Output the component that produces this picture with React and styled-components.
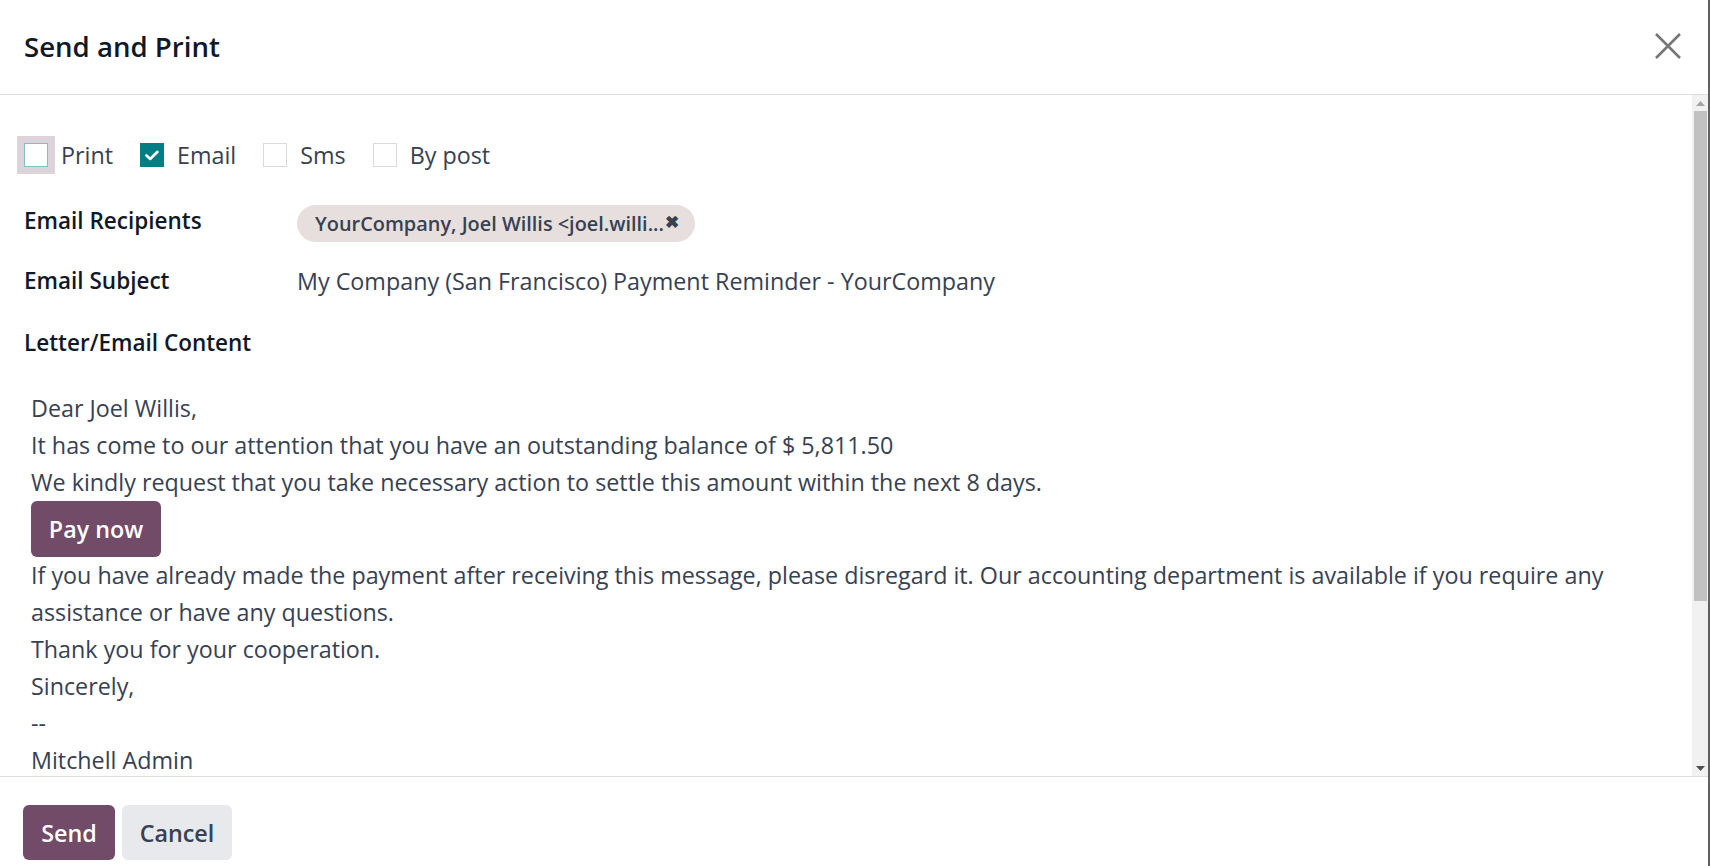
import styled, { createGlobalStyle } from 'styled-components';

const GlobalStyle = createGlobalStyle`
  html, body {
    margin: 0;
    padding: 0;
    background: #fff;
  }
  body {
    font-family: "Open Sans", "Noto Sans", sans-serif;
    color: #374151;
  }
  * {
    box-sizing: border-box;
  }
`;

const Dialog = styled.div`
  display: flex;
  flex-direction: column;
  height: 100vh;
  width: 100%;
  border-right: 2px solid #5f5f5f;
  background: #fff;
`;

const Header = styled.header`
  display: flex;
  align-items: center;
  justify-content: space-between;
  height: 95px;
  padding: 0 27px 2px 24px;
  border-bottom: 1px solid #dcdde0;
  flex-shrink: 0;
`;

const Title = styled.h4`
  margin: 0;
  font-size: 27.6px;
  font-weight: 600;
  color: #111827;
`;

const CloseButton = styled.button`
  border: 0;
  background: none;
  padding: 0;
  width: 26px;
  height: 26px;
  cursor: pointer;
  display: flex;
  svg {
    display: block;
  }
`;

const Middle = styled.div`
  flex: 1;
  min-height: 0;
  display: flex;
`;

const Body = styled.main`
  flex: 1;
  min-width: 0;
  overflow: hidden;
  padding: 41px 24px 0 24px;
`;

const Scrollbar = styled.div`
  width: 16px;
  flex-shrink: 0;
  display: flex;
  flex-direction: column;
  background: #f1f1f1;
`;

const ScrollArrow = styled.div`
  height: 16px;
  display: flex;
  align-items: center;
  justify-content: center;
  flex-shrink: 0;
`;

const ScrollTrack = styled.div`
  flex: 1;
  padding: 0 1px 0 2px;
`;

const ScrollThumb = styled.div`
  height: 490px;
  background: #c1c1c1;
`;

const OptionRow = styled.div`
  display: flex;
  align-items: center;
  height: 38px;
`;

const Option = styled.label`
  display: flex;
  align-items: center;
  gap: 13px;
  margin-right: 27px;
  font-size: 23.3px;
  color: #374151;
  cursor: pointer;
`;

const Box = styled.span`
  width: 24px;
  height: 24px;
  display: flex;
  align-items: center;
  justify-content: center;
  border: 1px solid ${(p) => (p.$checked ? '#017e84' : p.$focus ? '#7fbfc2' : '#d8dadd')};
  background: ${(p) => (p.$checked ? '#017e84' : '#fff')};
  box-shadow: ${(p) => (p.$focus ? '0 0 0 7px #ddd3da' : 'none')};
`;

const FieldRow = styled.div`
  display: grid;
  grid-template-columns: 273px 1fr;
  align-items: center;
  min-height: 37px;
  margin-top: ${(p) => p.$gap}px;
`;

const FieldLabel = styled.div`
  font-size: 22.5px;
  font-weight: 600;
  color: #111827;
  line-height: 37px;
  margin-top: ${(p) => p.$shift || 0}px;
`;

const FieldValue = styled.div`
  font-size: 23.3px;
  line-height: 37px;
  color: #374151;
`;

const Tag = styled.span`
  display: inline-flex;
  align-items: center;
  height: 37px;
  padding: 0 16px 0 18px;
  border-radius: 19px;
  background: #e6dfde;
  color: #374151;
  font-size: 19.9px;
  font-weight: 600;
  gap: 1px;
`;

const TagRemove = styled.span`
  font-size: 17px;
  color: #374151;
  line-height: 1;
  margin-top: -4px;
`;

const Letter = styled.div`
  padding: 29px 7px 0 7px;
  font-size: 23.3px;
  line-height: 37px;
  color: #374151;
  max-width: 1625px;
`;

const Line = styled.div``;

const PayButton = styled.a`
  display: inline-flex;
  align-items: center;
  justify-content: center;
  width: 130px;
  height: 56px;
  border-radius: 6px;
  background: #714b67;
  color: #fff;
  font-size: 23.3px;
  font-weight: 600;
  text-decoration: none;
  vertical-align: top;
`;

const Footer = styled.footer`
  display: flex;
  gap: 7px;
  height: 90px;
  padding: 28px 23px 0;
  border-top: 1px solid #dcdde0;
  flex-shrink: 0;
`;

const Button = styled.button`
  height: 55px;
  width: ${(p) => (p.$primary ? 92 : 110)}px;
  padding: 0;
  border: 0;
  border-radius: 6px;
  background: ${(p) => (p.$primary ? '#714b67' : '#e7e9ed')};
  color: ${(p) => (p.$primary ? '#fff' : '#374151')};
  font-family: inherit;
  font-size: 23.3px;
  font-weight: 600;
  cursor: pointer;
`;

function Check() {
  return (
    <svg width="14" height="11" viewBox="0 0 14 11">
      <path d="M1.5 5.5 L5.2 9 L12.5 1.8" fill="none" stroke="#fff" strokeWidth="2.6" strokeLinecap="round" strokeLinejoin="round" />
    </svg>
  );
}

function Arrow({ up, color }) {
  return (
    <svg width="9" height="5" viewBox="0 0 9 5">
      <path d={up ? 'M0 5 L4.5 0 L9 5 Z' : 'M0 0 L9 0 L4.5 5 Z'} fill={color} />
    </svg>
  );
}

const options = [
  { label: 'Print', checked: false, focus: true },
  { label: 'Email', checked: true },
  { label: 'Sms', checked: false },
  { label: 'By post', checked: false },
];

export default function App() {
  return (
    <>
      <GlobalStyle />
      <Dialog>
        <Header>
          <Title>Send and Print</Title>
          <CloseButton aria-label="Close">
            <svg width="26" height="26" viewBox="0 0 26 26">
              <path d="M1 1 L25 25 M25 1 L1 25" stroke="#767676" strokeWidth="2.6" />
            </svg>
          </CloseButton>
        </Header>
        <Middle>
          <Body>
            <OptionRow>
              {options.map((o) => (
                <Option key={o.label}>
                  <Box $checked={o.checked} $focus={o.focus}>
                    {o.checked && <Check />}
                  </Box>
                  {o.label}
                </Option>
              ))}
            </OptionRow>
            <FieldRow $gap={30}>
              <FieldLabel $shift={-6}>Email Recipients</FieldLabel>
              <FieldValue>
                <Tag>
                  YourCompany, Joel Willis &lt;joel.willi...
                  <TagRemove>✖</TagRemove>
                </Tag>
              </FieldValue>
            </FieldRow>
            <FieldRow $gap={21}>
              <FieldLabel $shift={-2}>Email Subject</FieldLabel>
              <FieldValue>My Company (San Francisco) Payment Reminder - YourCompany</FieldValue>
            </FieldRow>
            <FieldRow $gap={24}>
              <FieldLabel>Letter/Email Content</FieldLabel>
            </FieldRow>
            <Letter>
              <Line>Dear Joel Willis,</Line>
              <Line>It has come to our attention that you have an outstanding balance of $ 5,811.50</Line>
              <Line>We kindly request that you take necessary action to settle this amount within the next 8 days.</Line>
              <PayButton href="#">Pay now</PayButton>
              <Line>
                If you have already made the payment after receiving this message, please disregard it. Our accounting department is available if you require any assistance or have any questions.
              </Line>
              <Line>Thank you for your cooperation.</Line>
              <Line>Sincerely,</Line>
              <Line>--</Line>
              <Line>Mitchell Admin</Line>
            </Letter>
          </Body>
          <Scrollbar>
            <ScrollArrow>
              <Arrow up color="#a3a3a3" />
            </ScrollArrow>
            <ScrollTrack>
              <ScrollThumb />
            </ScrollTrack>
            <ScrollArrow>
              <Arrow color="#505050" />
            </ScrollArrow>
          </Scrollbar>
        </Middle>
        <Footer>
          <Button $primary>Send</Button>
          <Button>Cancel</Button>
        </Footer>
      </Dialog>
    </>
  );
}
